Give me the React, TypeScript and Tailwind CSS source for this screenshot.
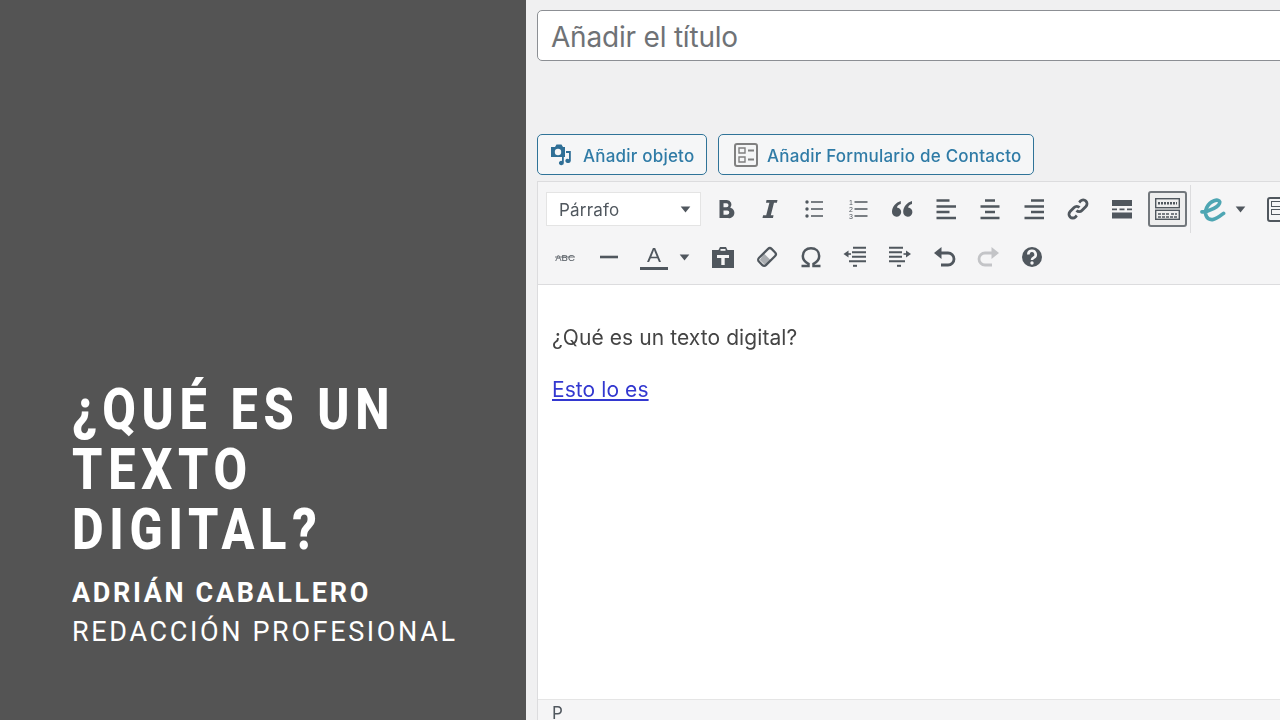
import type { ReactNode } from "react";

const C = "#50575e";
const BG = "#f5f5f6";

function Ic({ w = 44, children }: { w?: number; children: ReactNode }) {
  return (
    <div className="flex h-[44px] shrink-0 items-center justify-center" style={{ width: w }}>
      {children}
    </div>
  );
}

function S({ children }: { children: ReactNode }) {
  return (
    <svg width={24} height={24} viewBox="0 0 24 24" fill="none">
      {children}
    </svg>
  );
}

const Lines = ({ d, sw = 2, c = C }: { d: string; sw?: number; c?: string }) => <path d={d} stroke={c} strokeWidth={sw} fill="none" />;

const Caret = () => (
  <svg width="11" height="7" viewBox="0 0 12 8">
    <path d="M0.5 0.5H11.5L6 7.5Z" fill={C} />
  </svg>
);

function App() {
  return (
    <div className="flex h-[720px] w-[1280px] overflow-hidden bg-[#f0f0f1] font-['Inter','Liberation_Sans',sans-serif]">
      <aside className="flex h-full w-[526px] shrink-0 flex-col bg-[#545454] pl-[72px] pt-[379px] font-['Roboto',sans-serif] text-white">
        <h1 className="w-[440px] origin-left scale-x-[0.84] text-[58px] font-extrabold leading-[60px] tracking-[6.8px]">¿QUÉ ES UN TEXTO DIGITAL?</h1>
        <p className="mt-[16px] whitespace-nowrap text-[27px] font-bold leading-[36px] tracking-[2.65px]">ADRIÁN CABALLERO</p>
        <p className="mt-[3px] whitespace-nowrap text-[27px] font-normal leading-[36px] tracking-[2.65px]">REDACCIÓN PROFESIONAL</p>
      </aside>

      <main className="flex h-full min-w-0 flex-1 flex-col pl-[11px] pt-[10px] blur-[0.6px]">
        <div className="flex h-[51px] w-[800px] shrink-0 items-center rounded-[5px] border border-[#8c8f94] bg-white pl-[13px] pt-[3px] text-[28px] tracking-[-0.2px] text-[#6f7276]">
          Añadir el título
        </div>

        <div className="mt-[73px] flex shrink-0 gap-[11px]">
          <button className="flex h-[41px] w-[170px] items-center rounded-[5px] border border-[#2f7398] bg-[#f5f6f7] pl-[11px] text-[17px] font-medium tracking-[0.2px] text-[#2f7ba6]">
            <svg width="26" height="26" viewBox="0 0 26 26" className="mr-[8px]">
              <path d="M2 5h4l1.500-2.500h5L14 5h2v10H2Z" fill="#2f6f96" />
              <circle cx="9" cy="10" r="3.200" fill="#f5f6f7" />
              <path d="M13 23a2.200 2.200 0 1 1 0-4V15h1.800v6a2 2 0 0 1-1.800 2ZM19 21a2.200 2.200 0 1 1 1-3.800V11h-3V9h4.800v10a2.500 2.500 0 0 1-2.800 2Z" fill="#2f6f96" />
            </svg>
            <span className="pt-[4px]">Añadir objeto</span>
          </button>
          <button className="flex h-[41px] w-[316px] items-center rounded-[5px] border border-[#2f7398] bg-[#f5f6f7] pl-[14px] text-[17px] font-medium tracking-[0.2px] text-[#2f7ba6]">
            <svg width="26" height="26" viewBox="0 0 26 26" className="mr-[8px]">
              <rect x="2" y="2" width="22" height="22" rx="2" fill="none" stroke="#808080" strokeWidth="2" />
              <path d="M6 6h6v5H6ZM6 15h6v5H6Z" fill="none" stroke="#808080" strokeWidth="1.400" />
              <path d="M15 8.500h6M15 17.500h6" stroke="#808080" strokeWidth="1.800" />
            </svg>
            <span className="pt-[4px]">Añadir Formulario de Contacto</span>
          </button>
        </div>

        <section className="mt-[6px] flex min-h-0 flex-1 flex-col border-l border-[#dcdcde]">
          <div className="h-[104px] shrink-0 border-y border-[#dcdcde] bg-[#f5f5f6] pl-[8px]">
            <div className="flex h-[54px] items-center">
              <div className="flex h-[34px] w-[155px] shrink-0 items-center justify-between border border-[#e4e4e4] bg-white pl-[12px] pr-[9px] text-[17px] tracking-[0.2px] text-[#50575e]">
                <span className="pt-[4px]">Párrafo</span>
                <Caret />
              </div>
              <div className="ml-[3px] flex items-center">
                <Ic>
                  <S>
                    <path d="M5.500 3h7.300a4.600 4.600 0 0 1 3.500 7.700A5 5 0 0 1 14 21H5.500ZM9.500 6.300v4h3a2 2 0 0 0 0-4ZM9.500 13.500v4.200h3.700a2.100 2.100 0 0 0 0-4.200Z" fill={C} fillRule="evenodd" />
                  </S>
                </Ic>
                <Ic>
                  <S>
                    <path d="M8.500 3h11l-.6 2.800H16L12.800 18.200h2.700L15 21H4.500l.6-2.800H8.200L11.400 5.800H8Z" fill={C} />
                  </S>
                </Ic>
                <Ic>
                  <S>
                    <circle cx="5" cy="5" r="1.700" fill={C} />
                    <circle cx="5" cy="12" r="1.700" fill={C} />
                    <circle cx="5" cy="19" r="1.700" fill={C} />
                    <Lines d="M9 5h12M9 12h12M9 19h12" sw={1.500} />
                  </S>
                </Ic>
                <Ic>
                  <S>
                    <text x="3" y="7.500" fontSize="7" fontFamily="Liberation Sans" fill={C}>1</text>
                    <text x="3" y="14.500" fontSize="7" fontFamily="Liberation Sans" fill={C}>2</text>
                    <text x="3" y="21.500" fontSize="7" fontFamily="Liberation Sans" fill={C}>3</text>
                    <Lines d="M8.500 5h13M8.500 12h13M8.500 19h13" sw={1.500} />
                  </S>
                </Ic>
                <Ic>
                  <S>
                    <path d="M10.800 4C6 5.500 2 9.500 2 15a4.600 4.600 0 1 0 4.900-4.500C7.300 8.800 8.800 7.500 10.800 7ZM22 4c-4.800 1.500-8.800 5.500-8.800 11a4.600 4.600 0 1 0 4.900-4.500c.4-1.700 1.900-3 3.900-3.500Z" fill={C} />
                  </S>
                </Ic>
                <Ic>
                  <S>
                    <Lines d="M2.500 3.500h13M2.500 9.500h19.500M2.500 15h13M2.500 21h19.500" sw={2.400} />
                  </S>
                </Ic>
                <Ic>
                  <S>
                    <Lines d="M7 3.500h10M2.500 9.500h19M7 15h10M2.500 21h19" sw={2.400} />
                  </S>
                </Ic>
                <Ic>
                  <S>
                    <Lines d="M9 3.500h13M2.500 9.500h19.500M9 15h13M2.500 21h19.500" sw={2.400} />
                  </S>
                </Ic>
                <Ic>
                  <S>
                    <path d="M10.500 13.500a3.800 3.800 0 0 0 5.400 0l4-4a3.800 3.800 0 0 0-5.400-5.400l-1.300 1.300M13.500 10.500a3.800 3.800 0 0 0-5.400 0l-4 4a3.800 3.800 0 0 0 5.400 5.400l1.300-1.300" stroke={C} strokeWidth="2.800" fill="none" />
                  </S>
                </Ic>
                <Ic>
                  <S>
                    <path d="M2 3h20v6H2ZM2 15.500h20v6H2Z" fill={C} />
                    <Lines d="M2 12.300h5M9.500 12.300h5M17 12.300h5" sw={1.800} />
                  </S>
                </Ic>
                <div className="ml-[4px] flex h-[36px] w-[39px] shrink-0 items-center justify-center rounded-[3px] border-2 border-[#72777c] bg-[#eeeeee]">
                  <svg width="25" height="22" viewBox="0 0 25 22" fill="none">
                    <rect x="0.700" y="0.700" width="23.600" height="9" stroke={C} strokeWidth="1.400" />
                    <rect x="0.700" y="12.300" width="23.600" height="9" stroke={C} strokeWidth="1.400" />
                    <path d="M3 5.200h19" stroke={C} strokeWidth="2.400" strokeDasharray="2 1" />
                    <path d="M3 16h11M16 16h6M3 19h19" stroke={C} strokeWidth="1.700" strokeDasharray="3 1" />
                  </svg>
                </div>
                <div className="ml-[3px] h-[48px] w-px shrink-0 bg-[#dcdcde]" />
                <div className="ml-[8px] flex shrink-0 items-center">
                  <svg width="27" height="25" viewBox="0 0 26 26" fill="none">
                    <path d="M2 15.500C10 15 21 9.500 20.500 5 19.500 1.500 10.500 3.500 7 11 4 18 7 24 13 23.500 17 23 20 20.500 24.500 17" stroke="#4ea6b3" strokeWidth="3.800" strokeLinecap="round" />
                  </svg>
                  <span className="ml-[9px] flex">
                    <Caret />
                  </span>
                </div>
                <div className="ml-[21px] flex h-[25px] w-[22px] shrink-0 flex-col gap-[2px] rounded-[3px] border-[2.5px] border-[#50575e] p-[2px]">
                  <span className="h-[6px] border border-[#50575e]" />
                  <span className="h-[6px] border border-[#50575e]" />
                </div>
              </div>
            </div>

            <div className="-mt-[7px] flex h-[56px] items-center">
              <div className="-ml-[3px] flex items-center">
                <Ic>
                  <S>
                    <path d="M2 12h20" stroke={C} strokeWidth="0.800" />
                    <text x="12" y="15.500" textAnchor="middle" fontSize="9.500" fontFamily="Liberation Sans" fill={C}>ABC</text>
                  </S>
                </Ic>
                <Ic>
                  <S>
                    <Lines d="M3 12h18" sw={2.600} />
                  </S>
                </Ic>
                <div className="ml-[8px] flex h-[44px] w-[30px] shrink-0 flex-col items-center justify-center leading-none">
                  <span className="font-['Liberation_Sans',sans-serif] text-[21px] leading-[20px] text-[#50575e]">A</span>
                  <span className="mt-[2px] h-[3px] w-[28px] bg-[#50575e]" />
                </div>
                <span className="ml-[10px] mr-[11px] flex">
                  <Caret />
                </span>
                <Ic>
                  <S>
                    <path d="M1 5h6.500l1.500-3h6l1.500 3H23v18H1Z" fill={C} />
                    <path d="M6 10h12v3h-4.300v7h-3.400v-7H6Z" fill={BG} />
                    <rect x="9.500" y="4" width="5" height="1.800" fill={BG} />
                  </S>
                </Ic>
                <Ic>
                  <S>
                    <rect x="3" y="7" width="18" height="10" rx="2.500" transform="rotate(-45 12 12)" fill={BG} stroke={C} strokeWidth="2.200" />
                    <path d="M9 8.500 15.500 15 12 18.500 9.500 19.500 4.800 15Z" fill={C} opacity="0.45" />
                  </S>
                </Ic>
                <Ic>
                  <S>
                    <path d="M2.500 21h7v-2.200C6.200 17.200 3.800 14.800 3.800 11 3.800 6.400 7.200 3.300 12 3.300S20.200 6.400 20.200 11c0 3.800-2.400 6.200-5.700 7.800V21h7" stroke={C} strokeWidth="2.500" fill="none" />
                  </S>
                </Ic>
                <Ic>
                  <S>
                    <Lines d="M10 2.800h13M9 7.300h14M9 11.800h14M6 16.300h17" sw={2} />
                    <Lines d="M10 20.800h4" sw={2} />
                    <path d="M0.500 9 5.500 5.500v7Z" fill={C} />
                    <Lines d="M4.500 9H8" sw={1.600} />
                  </S>
                </Ic>
                <Ic w={46}>
                  <S>
                    <Lines d="M1 2.800h14M1 7.300h13M1 11.800h13M1 16.300h16" sw={2} />
                    <Lines d="M9 20.800h4" sw={2} />
                    <path d="M23 9 18 5.500v7Z" fill={C} />
                    <Lines d="M15.500 9H19" sw={1.600} />
                  </S>
                </Ic>
                <Ic w={43}>
                  <S>
                    <path d="M4 8h11a6 6 0 0 1 0 12H8" stroke={C} strokeWidth="2.800" fill="none" />
                    <path d="M8.500 2v12L1 8Z" fill={C} />
                  </S>
                </Ic>
                <Ic>
                  <S>
                    <path d="M20 8H9a6 6 0 0 0 0 12h7" stroke="#c3c4c7" strokeWidth="2.800" fill="none" />
                    <path d="M15.500 2v12L23 8Z" fill="#c3c4c7" />
                  </S>
                </Ic>
                <Ic>
                  <S>
                    <circle cx="12" cy="12" r="10" fill={C} />
                    <path d="M8.300 9.500a3.700 3.700 0 1 1 5.500 3.200c-1.200.7-1.800 1.200-1.800 2.300" stroke={BG} strokeWidth="2.600" fill="none" />
                    <circle cx="12" cy="18" r="1.700" fill={BG} />
                  </S>
                </Ic>
              </div>
            </div>
          </div>

          <div className="min-h-0 flex-1 bg-white pl-[14px] pt-[39px] text-[21px] leading-[28px] tracking-[0.08px] text-[#444444]">
            <p>¿Qué es un texto digital?</p>
            <p className="mt-[24px]">
              <a className="text-[#3338d0] underline">Esto lo es</a>
            </p>
          </div>

          <div className="h-[21px] shrink-0 border-t border-[#e5e5e5] bg-[#f5f5f6] pl-[14px] text-[17px] leading-[27px] text-[#50575e]">P</div>
        </section>
      </main>
    </div>
  );
}

export default App;
